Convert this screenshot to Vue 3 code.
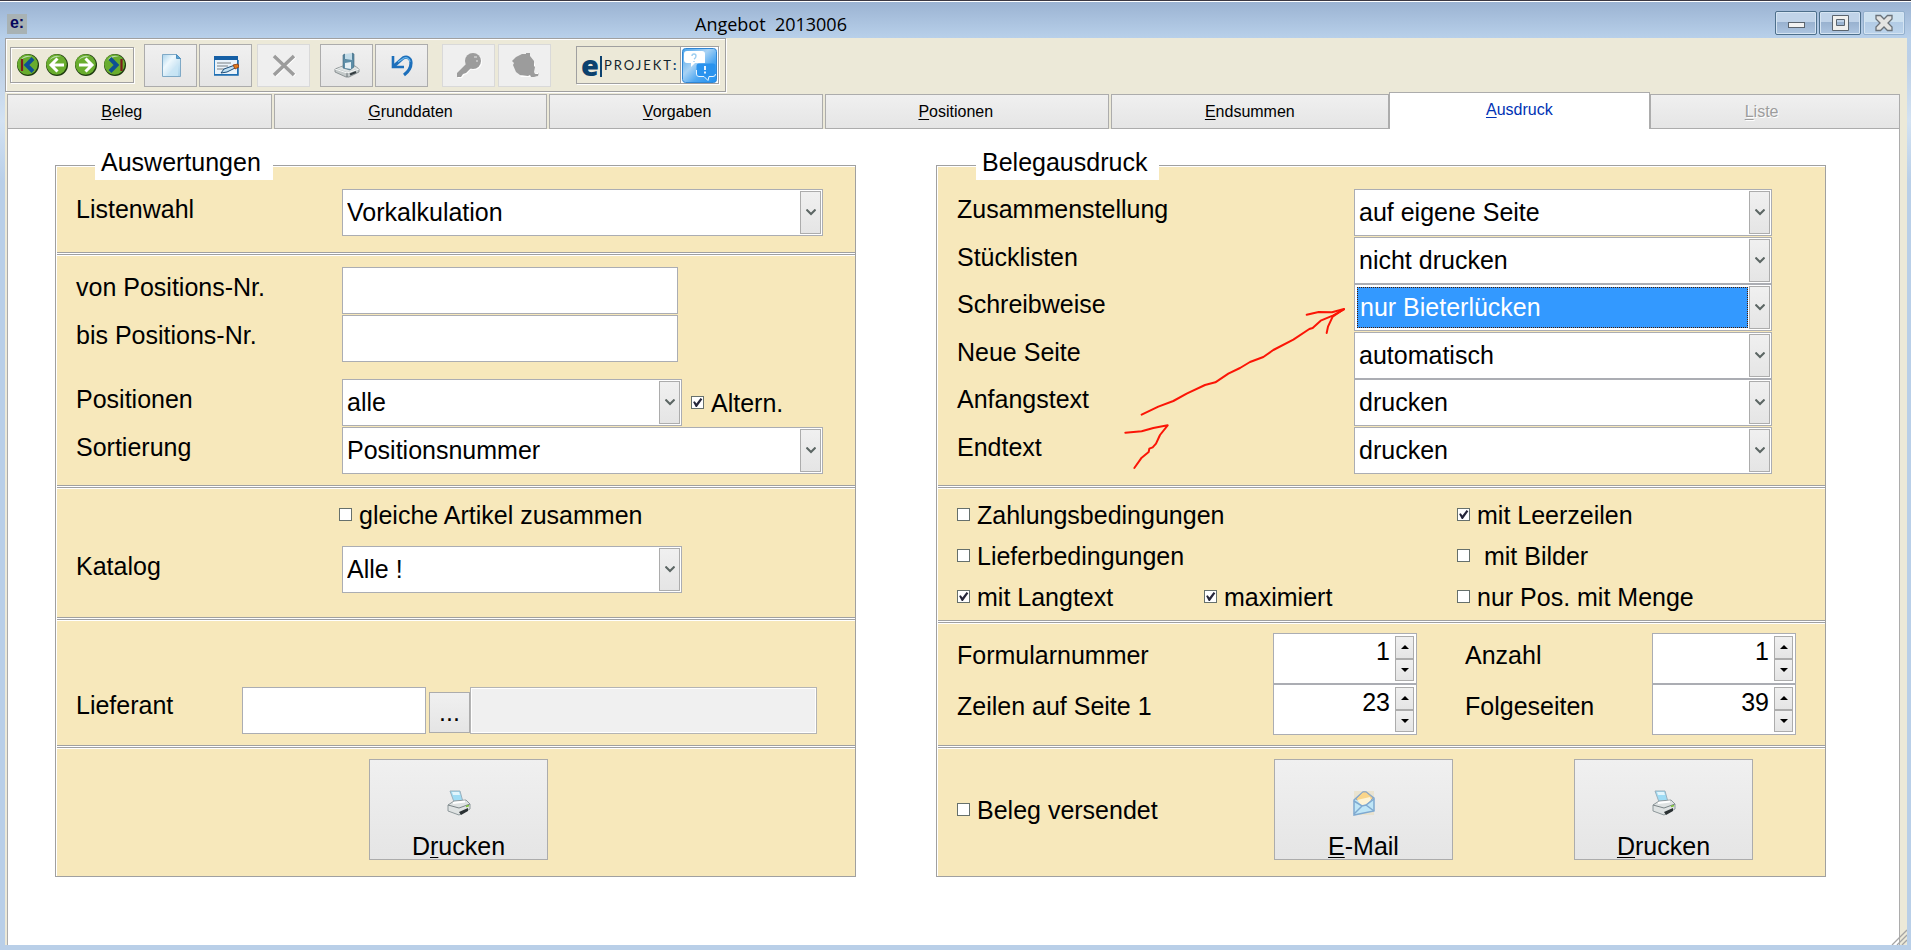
<script setup>
import { ref, reactive } from 'vue'

const nbsp = '\u00a0'

const tabs = [
  { key: 'B', rest: 'eleg', pad: 8, grow: 265 },
  { key: 'G', rest: 'runddaten', pad: 0, grow: 273 },
  { key: 'V', rest: 'orgaben', pad: 4, grow: 274 },
  { key: 'P', rest: 'ositionen', pad: 5, grow: 284 },
  { key: 'E', rest: 'ndsummen', pad: 0, grow: 278 },
  { key: 'A', rest: 'usdruck', pad: 0, grow: 261 },
  { key: 'L', rest: 'iste', pad: 6, grow: 250, disabled: true },
]
const activeTab = ref('A')

const printOptions = reactive([
  { id: 'zusammenstellung', label: 'Zusammenstellung', value: 'auf eigene Seite' },
  { id: 'stuecklisten', label: 'Stücklisten', value: 'nicht drucken' },
  { id: 'schreibweise', label: 'Schreibweise', value: 'nur Bieterlücken', active: true },
  { id: 'neueseite', label: 'Neue Seite', value: 'automatisch' },
  { id: 'anfangstext', label: 'Anfangstext', value: 'drucken' },
  { id: 'endtext', label: 'Endtext', value: 'drucken' },
])

const flags = reactive([
  { label: 'Zahlungsbedingungen', on: false, wide: true },
  { label: 'mit Leerzeilen', on: true },
  { label: 'Lieferbedingungen', on: false, wide: true },
  { label: nbsp + 'mit Bilder', on: false },
  { label: 'mit Langtext', on: true },
  { label: 'maximiert', on: true },
  { label: 'nur Pos. mit Menge', on: false },
])

const numbers = reactive([
  { id: 'formular', label: 'Formularnummer', value: 1 },
  { id: 'anzahl', label: 'Anzahl', value: 1 },
  { id: 'zeilen', label: 'Zeilen auf Seite 1', value: 23 },
  { id: 'folge', label: 'Folgeseiten', value: 39 },
])

const altern = ref(true)
const together = ref(false)
const sent = ref(false)
</script>

<template>
  <div class="window">
    <header class="titlebar">
      <span class="app-icon">e:</span>
      <h1 class="title">Angebot&nbsp; 2013006</h1>
      <div class="win-buttons">
        <button type="button" class="win-btn" aria-label="Minimieren">
          <svg width="20" height="16" viewBox="0 0 20 16"><rect x="2.500" y="7.500" width="16" height="5" fill="#f2f2f2" stroke="#5a646e" /></svg>
        </button>
        <button type="button" class="win-btn" aria-label="Maximieren">
          <svg width="20" height="18" viewBox="0 0 20 18"><path d="M2.500 1.500h16v15h-16zM6.500 5.500v6h8v-6z" fill="#f0f0ee" stroke="#5a646e" fill-rule="evenodd" /></svg>
        </button>
        <button type="button" class="win-btn close" aria-label="Schließen">
          <svg width="20" height="18" viewBox="0 0 20 18"><path d="M2 1.500h4.500l3.500 3.500 3.500-3.500h4.500v3.500l-4 4 4 4v3.500h-4.500l-3.500-3.500-3.500 3.500h-4.500v-3.500l4-4-4-4z" fill="#e4e4e2" stroke="#6a7178" stroke-width="1.300" /></svg>
        </button>
      </div>
    </header>

    <div class="client">
      <div class="toolbar">
        <div class="nav-group">
          <button type="button" class="nav" aria-label="Erster">
            <svg width="24" height="24" viewBox="0 0 24 24"><circle cx="12" cy="12" r="11" fill="#1e3a10" /><circle cx="11.500" cy="11.500" r="10.300" fill="#69ad2e" /><path d="M4 8a9 9 0 0 1 12-4.500c-4 0-9 1-12 4.500z" fill="#b9dcae" /><path d="M6 6v12" stroke="#7d1c1c" stroke-width="2.200" /><path d="M17 5.500L10.500 12 17 18.500" fill="none" stroke="#0d4f94" stroke-width="4" /></svg>
          </button>
          <button type="button" class="nav" aria-label="Zurück">
            <svg width="24" height="24" viewBox="0 0 24 24"><circle cx="12" cy="12" r="11" fill="#1e3a10" /><circle cx="11.500" cy="11.500" r="10.300" fill="#69ad2e" /><path d="M4 8a9 9 0 0 1 12-4.500c-4 0-9 1-12 4.500z" fill="#b9dcae" /><path d="M19 12H7M12.500 5.500L6 12l6.500 6.500" fill="none" stroke="#fff" stroke-width="3" /></svg>
          </button>
          <button type="button" class="nav" aria-label="Weiter">
            <svg width="24" height="24" viewBox="0 0 24 24"><circle cx="12" cy="12" r="11" fill="#1e3a10" /><circle cx="11.500" cy="11.500" r="10.300" fill="#69ad2e" /><path d="M4 8a9 9 0 0 1 12-4.500c-4 0-9 1-12 4.500z" fill="#b9dcae" /><path d="M5 12h12M11.500 5.500L18 12l-6.500 6.500" fill="none" stroke="#fff" stroke-width="3" /></svg>
          </button>
          <button type="button" class="nav" aria-label="Letzter">
            <svg width="24" height="24" viewBox="0 0 24 24"><circle cx="12" cy="12" r="11" fill="#1e3a10" /><circle cx="11.500" cy="11.500" r="10.300" fill="#69ad2e" /><path d="M4 8a9 9 0 0 1 12-4.500c-4 0-9 1-12 4.500z" fill="#b9dcae" /><path d="M18.500 6v12" stroke="#7d1c1c" stroke-width="2.200" /><path d="M7 5.500l6.500 6.500L7 18.500" fill="none" stroke="#0d4f94" stroke-width="4" /></svg>
          </button>
        </div>

        <div class="tools">
          <button type="button" class="tool" aria-label="Neu">
            <svg width="26" height="26" viewBox="0 0 26 26">
              <defs><linearGradient id="doc" x1="0" y1="0" x2="1" y2="1"><stop offset="0" stop-color="#a9d3ec" /><stop offset=".35" stop-color="#eef8fd" /><stop offset="1" stop-color="#a5d0ea" /></linearGradient></defs>
              <path d="M4.500 2.500h14l4 4v18h-18z" fill="url(#doc)" stroke="#7fa9c6" /><path d="M18.500 2.500v4h4z" fill="#5aa5d6" stroke="#4f8fbd" /><path d="M8 24l12-12v12z" fill="#c9e6f5" opacity=".8" />
            </svg>
          </button>
          <button type="button" class="tool" aria-label="Bearbeiten">
            <svg width="26" height="26" viewBox="0 0 26 26">
              <rect x="1.500" y="4.500" width="23" height="18" fill="#eaf3fa" stroke="#2d7ec0" /><path d="M1 4h24v4H1z" fill="#155fa5" /><path d="M4 11h14M4 14h11M4 17h7" stroke="#9fa6ab" stroke-width="1.500" /><path d="M25 8v15H1" fill="none" stroke="#1d6cb0" stroke-width="1.500" />
              <path d="M8 21l3-4 11-4 2 2-10 5z" fill="#bfe0f3" stroke="#1c4d78" /><path d="M20 13l5-1 1 3-4 2z" fill="#e07a1d" stroke="#8a3a10" stroke-width=".8" />
            </svg>
          </button>
        </div>

        <div class="tools gap-s">
          <button type="button" class="tool" disabled aria-label="Löschen">
            <svg width="26" height="26" viewBox="0 0 26 26"><path d="M4 4.500l20 19M24 4.500l-20 19" stroke="#fff" stroke-width="3.500" /><path d="M3 4L23 23M23 4L3 23" stroke="#9c9c9c" stroke-width="3.500" /></svg>
          </button>
        </div>

        <div class="tools gap-m">
          <button type="button" class="tool" aria-label="Speichern">
            <svg width="26" height="26" viewBox="0 0 26 26">
              <path d="M1 17l8-3h12l4 3v3l-10 5h-3L1 20z" fill="#c4caca" stroke="#798184" stroke-width=".8" /><path d="M1 17l12 4 12-4" fill="none" stroke="#f4f6f6" /><path d="M3 16.500l7-2.500h10l4 2.500-11 3.500z" fill="#dfe3e3" /><path d="M13 21v4" stroke="#6d7578" /><path d="M16 22.500l6-2.500" stroke="#333c40" stroke-width="2" />
              <path d="M9 3l2-1v5h7V1l2 1v13l-4 3-7-2z" fill="#5d8ea8" stroke="#3f6478" stroke-width=".6" /><path d="M11 2l7-1v7l-7-1z" fill="#c3dce8" /><path d="M11 11l6-1v7l-6-1z" fill="#e6f0f5" />
            </svg>
          </button>
          <button type="button" class="tool" aria-label="Rückgängig">
            <svg width="26" height="26" viewBox="0 0 26 26"><path d="M5 14l9-8c4-2 8 0 8 5 0 4-3 9-7 12" fill="none" stroke="#1c6fbb" stroke-width="3.200" /><path d="M4 4v11h11" fill="none" stroke="#1c6fbb" stroke-width="2.600" /><path d="M9 10l6-4c3-1 6 1 6 4" fill="none" stroke="#6db8ea" stroke-width="1.200" /></svg>
          </button>
        </div>

        <div class="tools gap-l">
          <button type="button" class="tool" disabled aria-label="Schlüssel">
            <svg width="26" height="26" viewBox="0 0 26 26"><g fill="#fff" transform="translate(1 1)"><circle cx="17" cy="9" r="8" /><path d="M10 12L1 21v4h4l2-3 3-1 4-5z" /></g><g fill="#9c9c9c"><circle cx="17" cy="9" r="8" /><path d="M11 11L1 21v4h4l2-3 3-1 5-5z" /></g><path d="M18 5h3M20 9h2" stroke="#e8e8e8" /></svg>
          </button>
          <button type="button" class="tool" disabled aria-label="Start">
            <svg width="28" height="26" viewBox="0 0 28 26"><path d="M9 25l17 0 2-5-4 2-2-3 2-4v-4z" fill="#fff" /><path d="M9 23l-4-3-3-7 1-2-2-2 4-4 6-3h4V1h4v3l4 5v5l1 1-1 5 1 2h3l1-2-1 4-4 1h-3l-1-2-2 1z" fill="#9c9c9c" /></svg>
          </button>
        </div>

        <div class="brand">
          <div class="brand-text"><b>e</b><i></i><span>PROJEKT<strong>:</strong></span></div>
          <button type="button" class="brand-chat" aria-label="Hilfe">
            <svg width="35" height="35" viewBox="0 0 35 35">
              <defs><linearGradient id="chat" x1="0" y1="0" x2="1" y2="1"><stop offset="0" stop-color="#4aa3ea" /><stop offset=".4" stop-color="#a8d2f4" /><stop offset=".65" stop-color="#4fa8f2" /><stop offset="1" stop-color="#1c8ff0" /></linearGradient></defs>
              <rect x="0.500" y="0.500" width="34" height="34" rx="3" fill="url(#chat)" stroke="#2f86d4" />
              <path d="M5 3h15q3 0 3 3v9H13l-4 4v-4H5q-3 0-3-3V6q0-3 3-3z" fill="#fff" />
              <path d="M10 8q0-2 2-2t2 2-2 3M12 13v1" fill="none" stroke="#9ccdf0" stroke-width="1.400" />
              <path d="M17 15.500h14q2.500 0 2.500 2.500v8q0 2.500-2.500 2.500h-4l-1 4-4-4h-5q-2.500 0-2.500-2.500v-8q0-2.500 2.500-2.500z" fill="#2a93ee" />
              <path d="M14.500 22v4q0 2.500 2.500 2.500h5l4 4 1-4h4q2.500 0 2.500-2.500" fill="none" stroke="#e8f5ff" />
              <path d="M23 18v4M23 23.500v2" stroke="#fff" stroke-width="1.800" />
            </svg>
          </button>
        </div>
      </div>

      <nav class="tabs" role="tablist">
        <button
          v-for="t in tabs"
          :key="t.key"
          type="button"
          role="tab"
          class="tab"
          :class="{ active: activeTab === t.key }"
          :disabled="t.disabled"
          :aria-selected="activeTab === t.key"
          :style="{ flexGrow: t.grow }"
          @click="activeTab = t.key"
        ><u>{{ t.key }}</u>{{ t.rest }}{{ nbsp.repeat(t.pad) }}</button>
      </nav>

      <main class="page">
        <section class="panel" aria-labelledby="auswertungen">
          <h2 id="auswertungen" class="legend">Auswertungen</h2>

          <div class="sec first">
            <div class="row-l">
              <label for="listenwahl">Listenwahl</label>
              <div class="combo">
                <select id="listenwahl"><option>Vorkalkulation</option></select>
                <span class="drop"><svg width="10" height="7" viewBox="0 0 10 7"><path d="M0.500 0.500L5 5l4.500-4.500" fill="none" stroke="#5c6664" stroke-width="2" /></svg></span>
              </div>
            </div>
          </div>

          <div class="sec range">
            <div class="row-l">
              <label for="von">von Positions-Nr.</label>
              <input id="von" class="text w-pos" type="text" />
            </div>
            <div class="row-l">
              <label for="bis">bis Positions-Nr.</label>
              <input id="bis" class="text w-pos" type="text" />
            </div>
            <div class="row-l spaced">
              <label for="positionen">Positionen</label>
              <div class="field">
                <div class="combo w-combo">
                  <select id="positionen"><option>alle</option></select>
                  <span class="drop"><svg width="10" height="7" viewBox="0 0 10 7"><path d="M0.500 0.500L5 5l4.500-4.500" fill="none" stroke="#5c6664" stroke-width="2" /></svg></span>
                </div>
                <label class="check"><input v-model="altern" type="checkbox" />Altern.</label>
              </div>
            </div>
            <div class="row-l">
              <label for="sortierung">Sortierung</label>
              <div class="combo">
                <select id="sortierung"><option>Positionsnummer</option></select>
                <span class="drop"><svg width="10" height="7" viewBox="0 0 10 7"><path d="M0.500 0.500L5 5l4.500-4.500" fill="none" stroke="#5c6664" stroke-width="2" /></svg></span>
              </div>
            </div>
          </div>

          <div class="sec catalog">
            <label class="check tall"><input v-model="together" type="checkbox" />gleiche Artikel zusammen</label>
            <div class="row-l">
              <label for="katalog">Katalog</label>
              <div class="combo w-combo">
                <select id="katalog"><option>Alle !</option></select>
                <span class="drop"><svg width="10" height="7" viewBox="0 0 10 7"><path d="M0.500 0.500L5 5l4.500-4.500" fill="none" stroke="#5c6664" stroke-width="2" /></svg></span>
              </div>
            </div>
          </div>

          <div class="sec supplier">
            <label for="lieferant">Lieferant</label>
            <input id="lieferant" class="text" type="text" />
            <button type="button" class="dots" aria-label="Lieferant suchen">...</button>
            <input class="text readonly" type="text" readonly aria-label="Lieferantenname" />
          </div>

          <div class="sec print">
            <button type="button" class="big">
              <svg width="24" height="26" viewBox="0 0 24 26"><path d="M3 1h10l3 11H7z" fill="#9fdcf5" stroke="#9bb0bd" /><path d="M5 2h7l1 3H6z" fill="#e2f5fc" /><path d="M1 15l6-4 12-1 4 4v5l-11 6-11-4z" fill="#dfe3e3" stroke="#8e989b" /><path d="M1 15l11 3 11-4" fill="none" stroke="#7b8487" /><path d="M6 13l12-1.500" stroke="#fff" stroke-width="2" /><path d="M12 22l9-4v3l-7 4z" fill="#2b3133" /><path d="M19 16.500l3-1" stroke="#7cc437" stroke-width="1.500" /></svg>
              <span>D<u>r</u>ucken</span>
            </button>
          </div>
        </section>

        <section class="panel" aria-labelledby="belegausdruck">
          <h2 id="belegausdruck" class="legend">Belegausdruck</h2>

          <div class="sec options">
            <div v-for="o in printOptions" :key="o.id" class="row-r">
              <label :for="o.id">{{ o.label }}</label>
              <div class="combo" :class="{ chosen: o.active }">
                <select :id="o.id"><option>{{ o.value }}</option></select>
                <span class="drop"><svg width="10" height="7" viewBox="0 0 10 7"><path d="M0.500 0.500L5 5l4.500-4.500" fill="none" stroke="#5c6664" stroke-width="2" /></svg></span>
              </div>
            </div>
          </div>

          <div class="sec flags">
            <label v-for="f in flags" :key="f.label" class="check tall" :class="{ wide: f.wide }"><input v-model="f.on" type="checkbox" />{{ f.label }}</label>
          </div>

          <div class="sec numbers">
            <template v-for="n in numbers" :key="n.id">
              <label :for="n.id">{{ n.label }}</label>
              <div class="spin">
                <input :id="n.id" v-model="n.value" type="number" />
                <div class="steps">
                  <button type="button" aria-label="Erhöhen" @click="n.value++"><svg width="8" height="4" viewBox="0 0 8 4"><path d="M4 0l4 4H0z" /></svg></button>
                  <button type="button" aria-label="Verringern" @click="n.value--"><svg width="8" height="4" viewBox="0 0 8 4"><path d="M4 4l4-4H0z" /></svg></button>
                </div>
              </div>
            </template>
          </div>

          <div class="sec actions">
            <label class="check"><input v-model="sent" type="checkbox" />Beleg versendet</label>
            <button type="button" class="big">
              <svg width="24" height="26" viewBox="0 0 24 26"><rect x="2" y="1" width="20" height="24" fill="#eadfc4" opacity=".7" /><path d="M2 10l9-8h3l8 6v13L2 25z" fill="#bfe6f7" stroke="#7fa9d0" stroke-width="1.500" /><path d="M4 9l7-7h3l7 6-7 7-3 0z" fill="#f9d58b" stroke="#9fa9b8" /><path d="M5 10l13-3 1 3-6 6-4-1z" fill="#fdf3d6" /><path d="M2 11l8 5 4-1 8-6M2 24l8-8M22 21l-8-6" fill="none" stroke="#7fa9d0" stroke-width="1.500" /></svg>
              <span><u>E</u>-Mail</span>
            </button>
            <button type="button" class="big">
              <svg width="24" height="26" viewBox="0 0 24 26"><path d="M3 1h10l3 11H7z" fill="#9fdcf5" stroke="#9bb0bd" /><path d="M5 2h7l1 3H6z" fill="#e2f5fc" /><path d="M1 15l6-4 12-1 4 4v5l-11 6-11-4z" fill="#dfe3e3" stroke="#8e989b" /><path d="M1 15l11 3 11-4" fill="none" stroke="#7b8487" /><path d="M6 13l12-1.500" stroke="#fff" stroke-width="2" /><path d="M12 22l9-4v3l-7 4z" fill="#2b3133" /><path d="M19 16.500l3-1" stroke="#7cc437" stroke-width="1.500" /></svg>
              <span><u>D</u>rucken</span>
            </button>
          </div>

          <svg class="marker" width="230" height="170" viewBox="600 489 690 510" aria-hidden="true">
            <g fill="none" stroke="#fb1506" stroke-width="6" stroke-linecap="round" stroke-linejoin="round">
              <path d="M665 824L715 800 760 783 800 761 855 735 886 727 925 701 960 684 990 666 1030 651 1060 630 1120 599 1168 567 1178 564 1202 542 1240 526 1272 508" />
              <path d="M1160 524L1196 516 1236 517 1272 507 1238 530 1224 560 1220 579" />
              <path d="M616 878L665 874 700 864 743 856 720 885 708 911 698 922 688 926 686 936 665 953 643 984" />
            </g>
          </svg>
        </section>

        <svg class="grip" width="16" height="16" viewBox="0 0 16 16" aria-hidden="true"><path d="M1 16L16 1M6 16L16 6M11 16l5-5" stroke="#a5a5a5" stroke-width="1.300" /></svg>
      </main>
    </div>
  </div>
</template>

<style>
html,
body {
  margin: 0;
  background: #b9cfe8;
}
</style>

<style scoped>
.window {
  box-sizing: border-box;
  display: flex;
  flex-direction: column;
  min-height: 100vh;
  padding: 0 4px 5px 5px;
  border-top: 1px solid #3b3842;
  background: linear-gradient(#fff 0 1px, #9bb3d2 1px, #b8d0ea 37px, #bccfe6 60px, #d3e2f2 120px, #b9cfe8 180px);
  font-family: "Liberation Sans", Arial, sans-serif;
  font-size: 25px;
  line-height: 28px;
  color: #000;
}
.window *,
.window *::before {
  box-sizing: border-box;
}
button,
input,
select {
  margin: 0;
  font: inherit;
  color: inherit;
  border-radius: 0;
}
button {
  padding: 0;
}
u {
  text-underline-offset: 2px;
  text-decoration-thickness: 1px;
}

.titlebar {
  display: grid;
  grid-template-columns: 690px 1fr auto;
  align-items: center;
  height: 37px;
}
.app-icon {
  width: 20px;
  height: 20px;
  margin: 8px 0 0 2px;
  background: #a8b2b4;
  color: #06065c;
  font-size: 16px;
  font-weight: bold;
  line-height: 18px;
  text-align: center;
}
.title {
  margin: 8px 0 0;
  font-family: "Open Sans", sans-serif;
  font-size: 18px;
  font-weight: 400;
  line-height: 24px;
}
.win-buttons {
  display: flex;
  gap: 2px;
  margin: 7px 2px 0 0;
}
.win-btn {
  display: flex;
  align-items: center;
  justify-content: center;
  width: 42px;
  height: 24px;
  border: 1px solid #4d6f8b;
  border-radius: 2px;
  box-shadow: inset 0 0 0 1px #d5e4f2;
  background: linear-gradient(#c0d3e8 45%, #98b1cf 45%, #adc5e0);
}
.win-btn.close {
  border-color: #93b0cd;
  background: linear-gradient(#cde1f0 45%, #b2cbe5 45%, #bcd4ec);
}

.client {
  flex: 1;
  display: flex;
  flex-direction: column;
  background: #ece9d8;
}

.toolbar {
  align-self: flex-start;
  display: flex;
  align-items: center;
  height: 54px;
  padding: 0 6px 0 4px;
  border: 1px solid #a0a0a0;
  box-shadow: inset 1px 1px 0 #fff, 1px 1px 0 #fff;
}
.nav-group {
  display: flex;
  align-items: center;
  gap: 4px;
  height: 36px;
  padding: 0 5px;
  margin-right: 10px;
  border: 1px solid #a0a0a0;
  box-shadow: inset 1px 1px 0 #fff, 1px 1px 0 #fff;
}
.nav {
  width: 25px;
  height: 24px;
  border: 0;
  background: none;
}
.nav svg {
  display: block;
}
.tools {
  display: flex;
  gap: 2px;
}
.gap-s {
  margin-left: 5px;
}
.gap-m {
  margin-left: 10px;
}
.gap-l {
  gap: 3px;
  margin-left: 14px;
}
.tool {
  display: flex;
  align-items: center;
  justify-content: center;
  width: 53px;
  height: 43px;
  border: 1px solid #acacac;
  background: linear-gradient(#f0f0f0, #e5e5e5);
}
.tool:disabled {
  border-color: #d9d9d9;
  background: #efefef;
}
.brand {
  display: flex;
  height: 38px;
  margin-left: 25px;
  border: 1px solid #a0a0a0;
  box-shadow: 1px 1px 0 #fff;
}
.brand-text {
  display: flex;
  align-items: center;
  width: 104px;
  padding-left: 4px;
  border-right: 1px solid #a0a0a0;
}
.brand-text b {
  color: #0c416e;
  font-family: "Open Sans", sans-serif;
  font-size: 29px;
  font-weight: 800;
  line-height: 30px;
}
.brand-text i {
  width: 2px;
  height: 21px;
  margin: 2px 2px 0 1px;
  background: #0c416e;
}
.brand-text span {
  display: flex;
  font-family: Lato, sans-serif;
  font-size: 13px;
  letter-spacing: 2px;
  color: #14242c;
}
.brand-text strong {
  color: #0c416e;
}
.brand-chat {
  width: 37px;
  border: 0;
  padding: 1px;
  background: #fff;
}
.brand-chat svg {
  display: block;
}

.tabs {
  display: flex;
  align-items: flex-end;
  height: 37px;
  padding: 0 7px 0 2px;
}
.tab {
  flex-basis: 0;
  height: 35px;
  margin-left: 2px;
  border: 1px solid #acacac;
  background: linear-gradient(#f0f0f0, #e5e5e5);
  font-size: 16px;
  white-space: pre;
}
.tab:first-child,
.tab.active,
.tab.active + .tab {
  margin-left: 0;
}
.tab.active {
  height: 37px;
  padding-bottom: 3px;
  border-bottom: 0;
  background: #fff;
  color: #0032b4;
}
.tab:disabled {
  color: #9d9d9d;
  text-shadow: 1px 1px 0 #fff;
}

.page {
  position: relative;
  flex: 1;
  display: grid;
  grid-template-columns: minmax(0, 801fr) minmax(0, 890fr);
  align-items: start;
  gap: 80px;
  margin: 0 7px 0 2px;
  padding: 36px 73px 24px 47px;
  border-left: 1px solid #acacac;
  border-right: 1px solid #acacac;
  background: #fff;
}
.grip {
  position: absolute;
  right: -8px;
  bottom: 0;
}

.panel {
  position: relative;
  border: 1px solid #a0a0a0;
  box-shadow: inset 1px 1px 0 #fff;
  padding: 1px 0 0 1px;
  background: #f7e8bb;
}
.legend {
  position: absolute;
  top: -18px;
  left: 39px;
  margin: 0;
  padding: 0 12px 4px 6px;
  background: #fff;
  font-size: 25px;
  font-weight: 400;
}
.sec + .sec {
  border-top: 4px solid #fff;
  border-image: linear-gradient(#a0a0a0 0 1px, #fff 1px 2px, #a0a0a0 2px 3px, #fff 3px) 4 0 0 0;
}
.row-l,
.row-r {
  display: grid;
  align-items: center;
}
.row-l {
  grid-template-columns: 266px minmax(0, 1fr);
}
.row-r {
  grid-template-columns: minmax(0, 397fr) minmax(0, 418fr);
}
.row-l > label,
.row-r > label,
.supplier > label,
.numbers > label {
  padding-bottom: 7px;
}
.first {
  padding: 22px 32px 16px 19px;
}
.range {
  display: grid;
  gap: 1px;
  padding: 11px 32px 11px 19px;
}
.spaced {
  margin-top: 16px;
}
.field {
  display: flex;
  align-items: center;
  gap: 9px;
}

.combo {
  display: flex;
  height: 47px;
  padding: 1px;
  border: 1px solid #abadb3;
  background: #fff;
}
.combo select {
  flex: 1;
  min-width: 0;
  padding: 0 3px 2px;
  border: 0;
  outline: 0;
  appearance: none;
  background: transparent;
}
.combo.chosen select {
  margin: 1px;
  padding: 0 2px 2px;
  border: 1px dotted #4a1c00;
  background: #39f;
  color: #fff;
}
.drop {
  display: flex;
  align-items: center;
  justify-content: center;
  width: 21px;
  border: 1px solid #acacac;
  background: linear-gradient(#f0f0f0, #e5e5e5);
}
.w-combo {
  width: 340px;
}
.w-pos {
  width: 336px;
}
.text {
  height: 47px;
  padding: 0 4px;
  border: 1px solid #abadb3;
  background: #fff;
}
.readonly {
  width: 100%;
  border-color: #b4b4b4;
  background: #f0f0f0;
  box-shadow: inset 0 0 0 1px #fff;
}

.check {
  display: flex;
  align-items: center;
  gap: 7px;
}
.check.tall {
  height: 41px;
}
.check input {
  flex: none;
  width: 13px;
  height: 13px;
  border: 1px solid #66706c;
  appearance: none;
  background: #fff;
}
.check input:checked::before {
  content: "";
  display: block;
  width: 11px;
  height: 11px;
  background: #26263a;
  clip-path: polygon(10% 45%, 25% 38%, 40% 60%, 78% 10%, 94% 20%, 44% 92%, 34% 92%);
}

.catalog {
  display: grid;
  gap: 11px;
  padding: 5px 32px 24px 19px;
}
.catalog > .check {
  margin-left: 263px;
}
.supplier {
  display: grid;
  grid-template-columns: 166px 184px 44px minmax(0, 1fr);
  align-items: center;
  padding: 66px 38px 11px 19px;
}
.supplier > label {
  padding-bottom: 11px;
}
.dots {
  height: 41px;
  margin: 3px 0 0 3px;
  border: 1px solid #acacac;
  background: linear-gradient(#f0f0f0, #e5e5e5);
}
.print {
  display: flex;
  justify-content: center;
  padding: 10px 0 16px 5px;
}
.big {
  display: flex;
  flex-direction: column;
  align-items: center;
  justify-content: flex-end;
  gap: 18px;
  width: 179px;
  height: 101px;
  border: 1px solid #acacac;
  background: linear-gradient(#f0f0f0, #e5e5e5);
  line-height: 25px;
}

.options {
  padding: 22px 53px 11px 19px;
}
.options .row-r:nth-of-type(odd) {
  margin-bottom: 1px;
}
.flags {
  display: grid;
  grid-template-columns: 247fr 253fr 315fr;
  padding: 5px 53px 3px 19px;
}
.flags .wide {
  grid-column: span 2;
}
.numbers {
  display: grid;
  grid-template-columns: 316fr 144px 235fr 144px;
  align-items: center;
  padding: 9px 29px 10px 19px;
}
.numbers .spin:nth-of-type(odd) + label {
  margin-left: 48px;
}
.spin {
  display: flex;
  height: 51px;
  padding: 2px;
  border: 1px solid #abadb3;
  background: #fff;
}
.spin input {
  flex: 1;
  min-width: 0;
  height: 30px;
  padding: 0 5px 0 0;
  border: 0;
  outline: 0;
  background: transparent;
  text-align: right;
  appearance: textfield;
}
.spin input::-webkit-inner-spin-button {
  display: none;
}
.steps {
  display: grid;
  width: 19px;
}
.steps button {
  display: flex;
  align-items: center;
  justify-content: center;
  border: 1px solid #acacac;
  background: linear-gradient(#f0f0f0, #e5e5e5);
}
.actions {
  display: grid;
  grid-template-columns: 317fr 179px 121fr 179px 72fr;
  align-items: center;
  padding: 10px 0 16px 19px;
}
.actions .big:last-child {
  grid-column: 4;
}

.marker {
  position: absolute;
  top: 137px;
  left: 183px;
  pointer-events: none;
}
</style>
